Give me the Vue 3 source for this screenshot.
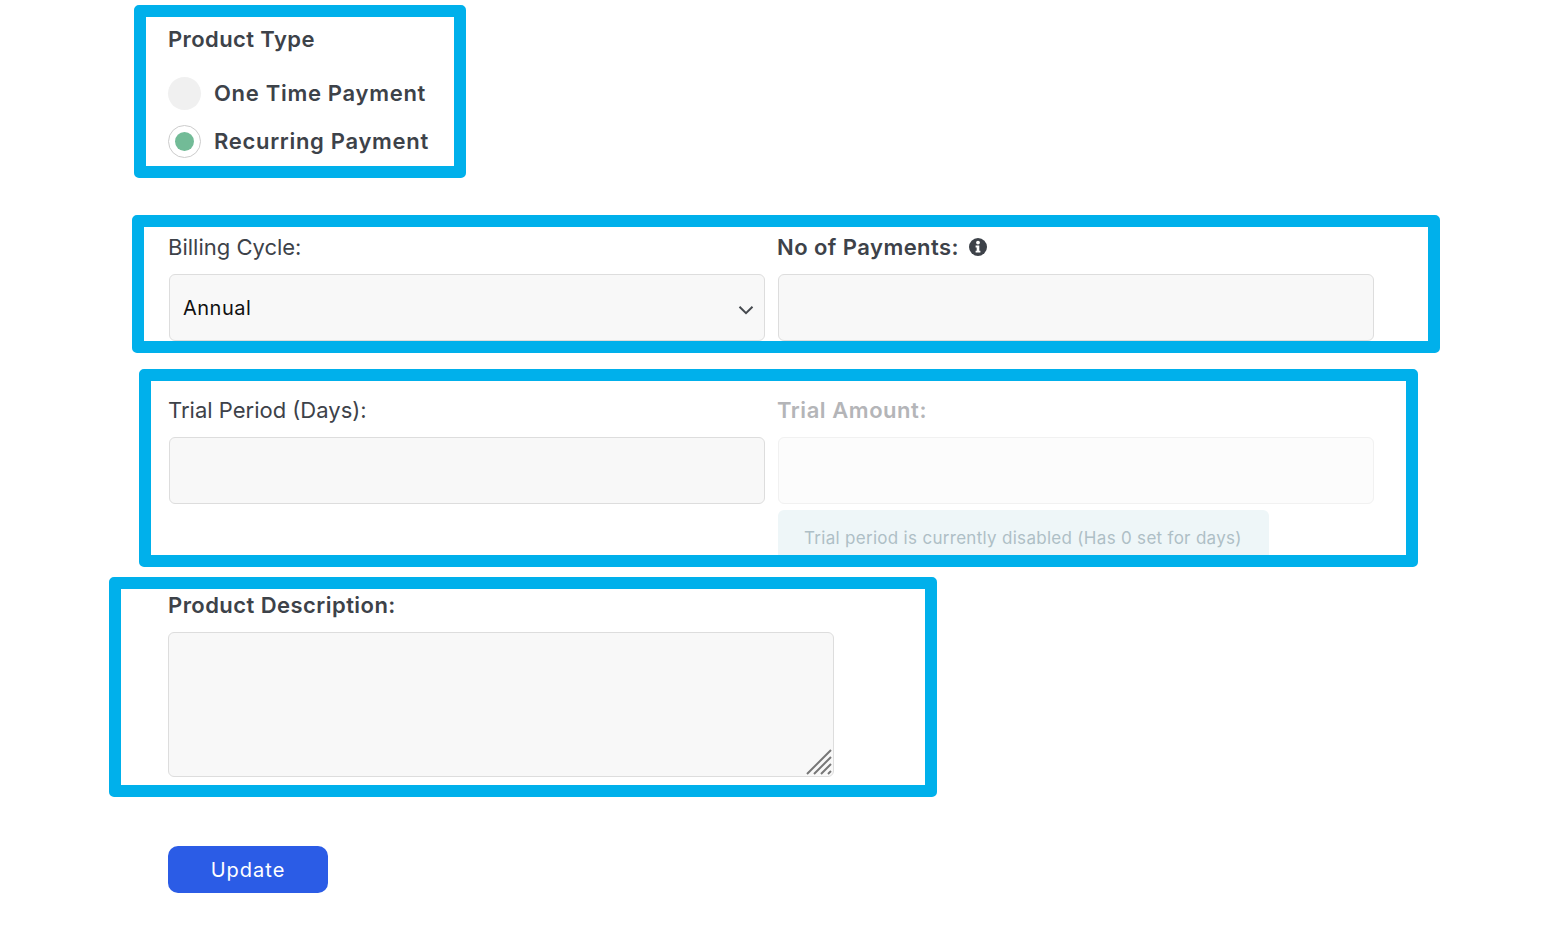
<script setup>
const paymentOptions = [
  { label: 'One Time Payment', selected: false },
  { label: 'Recurring Payment', selected: true },
]
</script>

<template>
  <main class="page">
    <section class="box box-type">
      <h2 class="type-title">Product Type</h2>
      <div class="radio-list">
        <label v-for="option in paymentOptions" :key="option.label" class="radio-row">
          <span class="radio" :class="{ selected: option.selected }"><span v-if="option.selected" class="dot"></span></span>
          <span class="radio-label">{{ option.label }}</span>
        </label>
      </div>
    </section>

    <section class="box box-billing">
      <div class="columns">
        <div class="field">
          <label class="label regular">Billing Cycle:</label>
          <div class="select-wrap">
            <select class="control select"><option>Annual</option></select>
            <svg class="chevron" viewBox="0 0 16 10" width="16" height="10"><path d="M1.5 1.8L8 8.2l6.5-6.4" fill="none" stroke="#45494e" stroke-width="2"/></svg>
          </div>
        </div>
        <div class="field">
          <label class="label">No of Payments:
            <svg class="info" viewBox="0 0 18 18" width="18" height="18"><circle cx="9" cy="9" r="9" fill="#3d4249"/><circle cx="9" cy="4.6" r="1.9" fill="#fff"/><path d="M6.6 7.6h3.7v5.2h1.1v1.8H6.6v-1.8h1.1V9.4H6.6z" fill="#fff"/></svg>
          </label>
          <input class="control" type="text" />
        </div>
      </div>
    </section>

    <section class="box box-trial">
      <div class="columns">
        <div class="field">
          <label class="label regular">Trial Period (Days):</label>
          <input class="control" type="text" />
        </div>
        <div class="field">
          <label class="label disabled">Trial Amount:</label>
          <input class="control control-disabled" type="text" disabled />
          <div class="notice">Trial period is currently disabled (Has 0 set for days)</div>
        </div>
      </div>
    </section>

    <section class="box box-desc">
      <label class="label desc-label">Product Description:</label>
      <div class="textarea-wrap">
        <textarea class="textarea"></textarea>
        <svg class="grip" viewBox="0 0 26 26" width="26" height="26"><path d="M1 25L25 1M8 25L25 8M15 25L25 15M22 25l3-3" fill="none" stroke="#777" stroke-width="2"/></svg>
      </div>
    </section>

    <button class="update" type="button">Update</button>
  </main>
</template>

<style>
body { background: #fff; }
</style>

<style scoped>
.page {
  height: 935px;
  box-sizing: border-box;
  padding-top: 5px;
  overflow: hidden;
  background: #fff;
  font-family: Inter, "Liberation Sans", sans-serif;
  color: #3d4249;
}
.box {
  box-sizing: border-box;
  border: 12px solid #00b0eb;
  border-radius: 5px;
  overflow: hidden;
}
.box-type { width: 332px; height: 173px; margin-left: 134px; padding: 7px 0 0 22px; }
.box-billing { width: 1308px; height: 138px; margin: 37px 0 0 132px; padding: 5px 0 0 24px; }
.box-trial { width: 1279px; height: 198px; margin: 16px 0 0 139px; padding: 14px 0 0 17px; }
.box-desc { width: 828px; height: 220px; margin: 10px 0 0 109px; padding: 1px 0 0 47px; }

.type-title { margin: 0; font-size: 22px; line-height: 30px; font-weight: 600; letter-spacing: 0.4px; }
.radio-list { display: flex; flex-direction: column; gap: 15px; margin-top: 23px; }
.radio-row { display: flex; align-items: center; gap: 13px; height: 33px; }
.radio {
  box-sizing: border-box; width: 33px; height: 33px; border-radius: 50%;
  background: #f0f0f0; display: flex; align-items: center; justify-content: center;
}
.radio.selected { background: #fff; border: 1px solid #ccc; }
.dot { width: 19px; height: 19px; border-radius: 50%; background: #72bb97; }
.radio-label { padding-bottom: 2px; font-size: 22px; font-weight: 600; letter-spacing: 0.7px; }

.columns { display: grid; grid-template-columns: 596px 596px; column-gap: 13px; margin-left: 1px; }
.field { min-width: 0; }
.label { display: flex; align-items: center; height: 30px; margin-left: -1px; font-size: 22px; font-weight: 600; letter-spacing: 0.45px; }
.label.regular { font-weight: 400; letter-spacing: 0; }
.label.disabled { color: #b4b5b8; letter-spacing: 0.55px; }
.desc-label { margin-left: 0; }
.info { margin-left: 10px; }
.control {
  display: block; box-sizing: border-box; width: 100%; height: 67px; margin-top: 12px; padding: 0 13px;
  border: 1px solid #ddd; border-radius: 6px; background: #f8f8f8;
  font: 400 20px Inter, "Liberation Sans", sans-serif; letter-spacing: 0.5px; color: #111; outline: none;
}
.control-disabled { background: #fcfcfc; border-color: #f1f1f1; }
.select-wrap { position: relative; }
.select { appearance: none; }
.chevron { position: absolute; right: 11px; top: 31px; }
.notice {
  box-sizing: border-box; width: 491px; height: 60px; margin-top: 6px; padding: 16px 0 0 26px;
  border-radius: 6px; background: #eef6f8; color: #aebfc6; font-size: 17px; line-height: 24px; letter-spacing: 0.3px; white-space: nowrap;
}
.textarea-wrap { position: relative; width: 666px; height: 145px; margin-top: 12px; }
.textarea {
  display: block; box-sizing: border-box; width: 100%; height: 100%;
  border: 1px solid #ddd; border-radius: 6px; background: #f8f8f8; resize: none; outline: none;
}
.grip { position: absolute; right: 2px; bottom: 2px; }
.update {
  display: block; width: 160px; height: 47px; margin: 49px 0 0 168px; border: 0; border-radius: 10px;
  background: #2b5ce6; color: #fff; font: 400 20px Inter, "Liberation Sans", sans-serif; letter-spacing: 1px;
}
</style>
